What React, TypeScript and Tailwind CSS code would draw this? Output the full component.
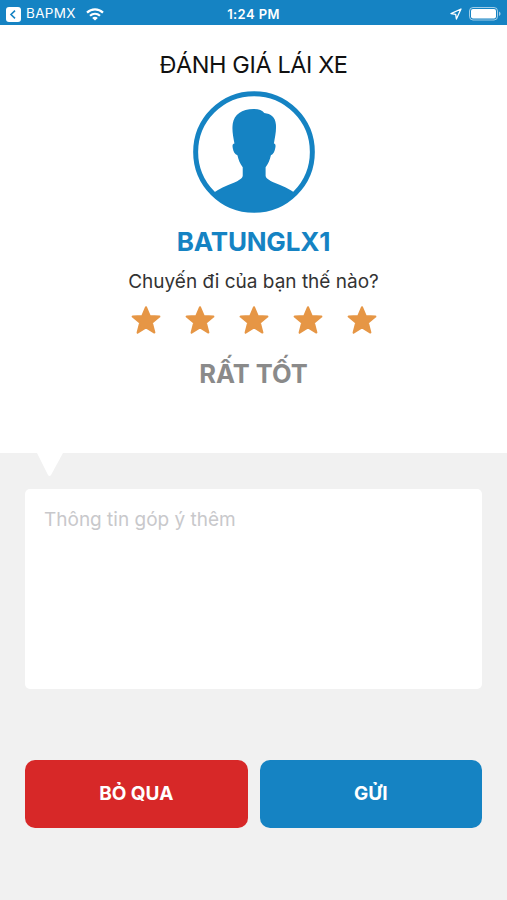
import { useState } from "react";

const ratings = ["RẤT TỆ", "TỆ", "BÌNH THƯỜNG", "TỐT", "RẤT TỐT"];

function StatusBar() {
  return (
    <header className="grid h-[25px] shrink-0 grid-cols-3 items-center bg-[#1583c3] pt-[3px] text-white">
      <div className="flex items-center pl-[6px]">
        <svg width="15" height="15" viewBox="0 0 15 15">
          <rect width="15" height="15" rx="3" fill="white" />
          <path d="M9 3.7 5 7.5l4 3.8" fill="none" stroke="#1583c3" strokeWidth="1.6" />
        </svg>
        <span className="ml-[5px] text-[13.5px] leading-none tracking-[0.35px]">BAPMX</span>
        <svg className="ml-[10px]" width="18" height="13" viewBox="0 0 18 13" fill="none" stroke="white" strokeWidth="2.2">
          <path d="M1 4.6C5.5.3 12.5.3 17 4.6" />
          <path d="M4 7.8c2.9-2.6 7.1-2.6 10 0" />
          <path d="M9 12.6 6.2 9.9c1.6-1.4 4-1.4 5.6 0Z" fill="white" stroke="none" />
        </svg>
      </div>
      <p className="text-center text-[13px] leading-none font-semibold tracking-[0.4px]">1:24 PM</p>
      <div className="flex items-center justify-end pr-[5px]">
        <svg className="mr-[7px]" width="12" height="12" viewBox="0 0 12 12">
          <path d="M11 1 1 5.6l4.7.7.7 4.7Z" fill="none" stroke="white" strokeWidth="1.3" strokeLinejoin="round" />
        </svg>
        <svg width="33" height="14" viewBox="0 0 33 14">
          <rect x="0.5" y="0.5" width="28" height="12.5" rx="3.5" fill="none" stroke="white" strokeOpacity="0.6" />
          <rect x="2" y="2" width="25" height="9.5" rx="2" fill="white" />
          <path d="M30 4.5c2 .8 2 3.700 0 4.500Z" fill="white" fillOpacity="0.6" />
        </svg>
      </div>
    </header>
  );
}

function Avatar() {
  return (
    <svg width="122" height="122" viewBox="23 18 368 368" className="text-[#1583c3]">
      <circle cx="207" cy="202" r="176" fill="none" stroke="currentColor" strokeWidth="15" />
      <path
        fill="currentColor"
        d="M84 326C100 314 122 304 148 294C162 288 172 282 173 274V248C165 238 160 226 157 212C149 210 145 201 143 191C141 181 143 176 148 176C144 156 140 136 143 116C147 89 170 72 206 72C222 72 232 76 238 84C258 86 271 96 273 118C275 138 270 158 267 176C272 177 273 182 271 191C269 202 265 210 258 212C255 226 250 238 242 248V274C243 282 253 288 267 294C293 304 315 314 331 326C300 362 258 382 207 382C156 382 114 362 84 326Z"
      />
    </svg>
  );
}

export default function App() {
  const [rating, setRating] = useState(5);
  const [note, setNote] = useState("");

  return (
    <main className="flex h-[900px] w-full flex-col bg-white font-[Inter,'Liberation_Sans',sans-serif]">
      <StatusBar />

      {/* Driver */}
      <section className="flex h-[428px] shrink-0 flex-col items-center pt-[24px]">
        <h1 className="h-[42px] text-[23.5px] leading-[32px] tracking-[-0.4px] text-[#111]">ĐÁNH GIÁ LÁI XE</h1>
        <Avatar />
        <h2 className="mt-[13px] text-[26px] leading-[32px] font-bold tracking-[-0.2px] text-[#1583c3]">BATUNGLX1</h2>
        <p className="mt-[11px] text-[19px] leading-[26px] text-[#333]">Chuyến đi của bạn thế nào?</p>

        {/* Stars */}
        <div className="mt-[10px] flex gap-[24px]">
          {ratings.map((label, i) => (
            <button key={label} aria-label={label} onClick={() => setRating(i + 1)}>
              <svg
                width="30"
                height="30"
                viewBox="0 0 30 30"
                strokeWidth="2"
                strokeLinejoin="round"
                className={i < rating ? "fill-[#e69645] stroke-[#e69645]" : "fill-gray-300 stroke-gray-300"}
              >
                <path d="m15 2.200 3.700 8.800 9.700.6-7.500 6.200 2.500 9.800-8.400-5.300-8.400 5.300 2.500-9.800-7.500-6.200 9.700-.6Z" />
              </svg>
            </button>
          ))}
        </div>
        <p className="mt-[23px] text-[25.5px] leading-[32px] font-bold text-[#8a8a8a]">{ratings[rating - 1]}</p>
      </section>

      {/* Feedback */}
      <section className="flex grow flex-col bg-[#f1f1f1] px-[25px]">
        <svg className="ml-[12px] shrink-0" width="26" height="24" viewBox="0 0 26 24">
          <path d="M0 0h26L14 22q-1.500 2-3 0Z" fill="white" />
        </svg>
        <textarea
          value={note}
          onChange={(e) => setNote(e.target.value)}
          placeholder="Thông tin góp ý thêm"
          className="mt-[12px] h-[200px] w-full shrink-0 resize-none rounded-[5px] bg-white px-[19px] py-[18px] text-[19px] leading-[26px] outline-none placeholder:text-[#c8c8cb]"
        />
        <div className="mt-[71px] flex gap-[12px] text-[19px] font-bold text-white">
          <button className="h-[68px] flex-1 rounded-[10px] bg-[#d72828]">BỎ QUA</button>
          <button className="h-[68px] flex-1 rounded-[10px] bg-[#1583c3]">GỬI</button>
        </div>
      </section>
    </main>
  );
}
